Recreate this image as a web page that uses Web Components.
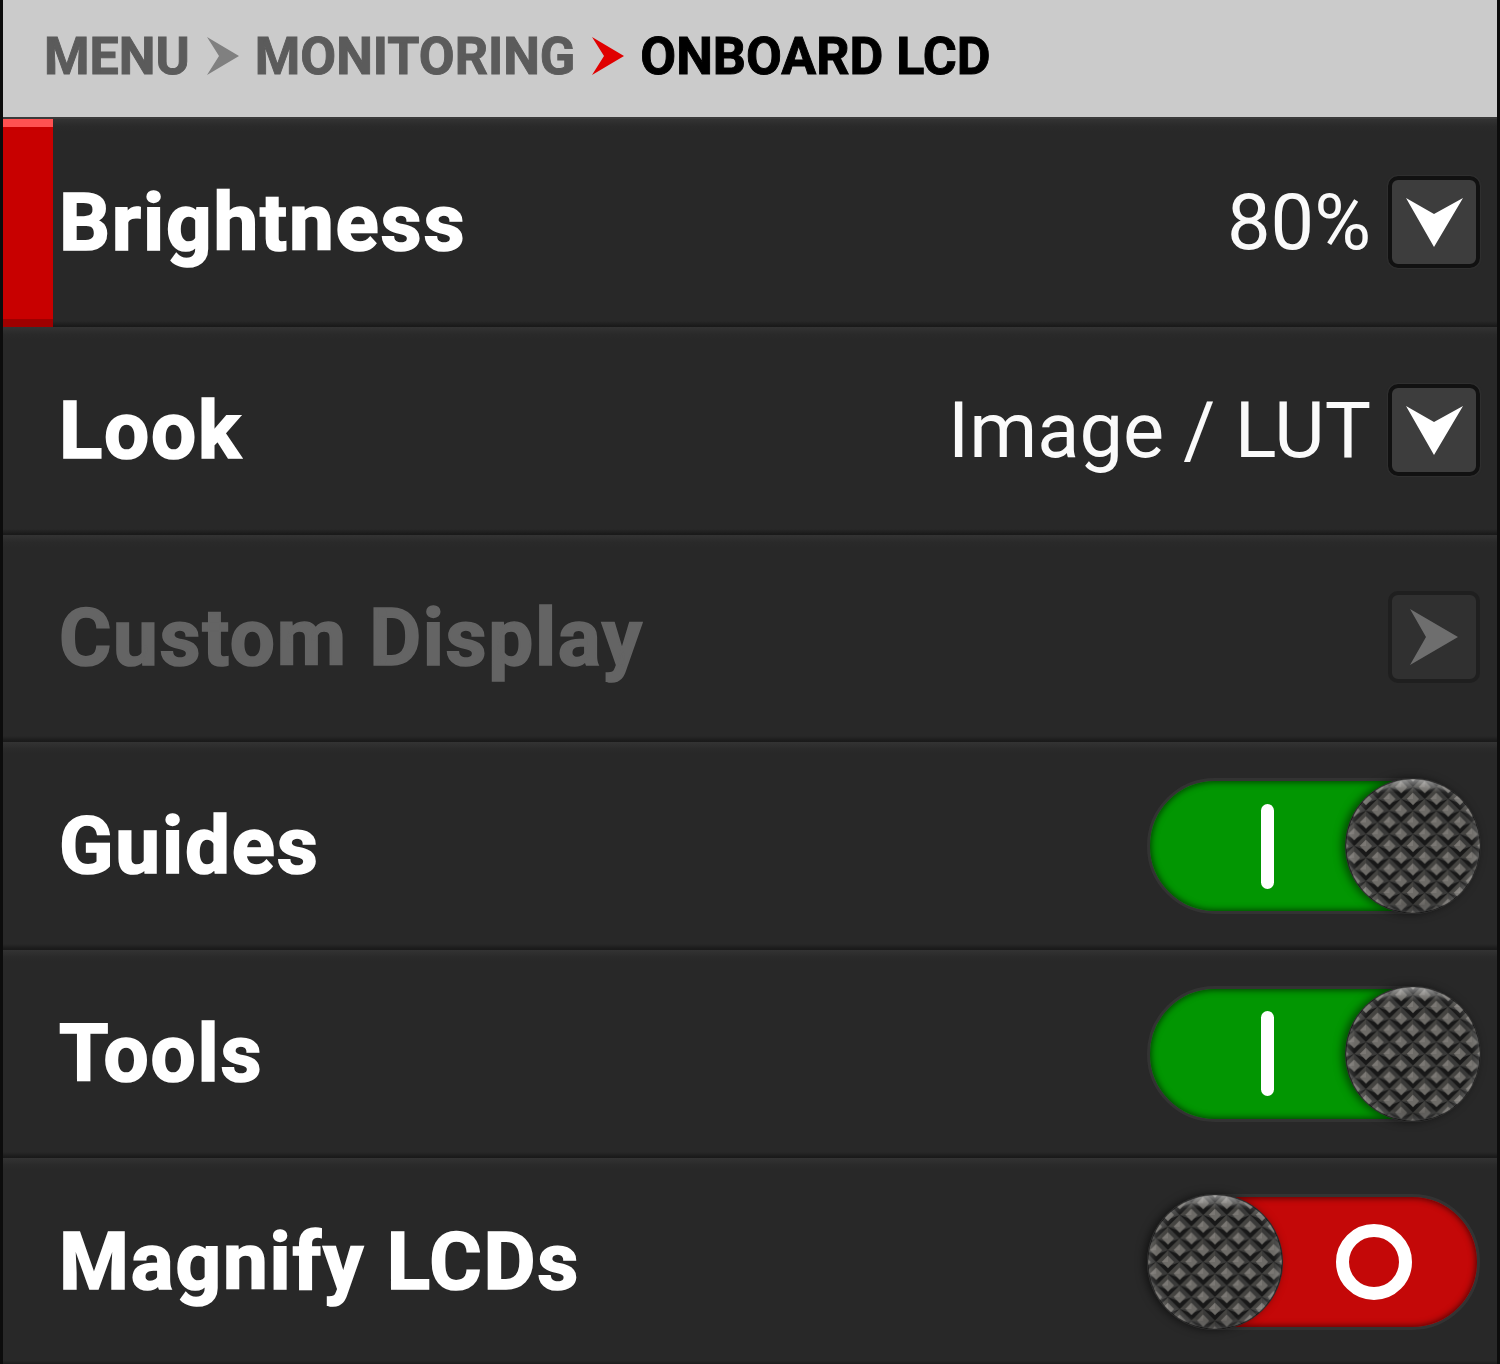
<!DOCTYPE html>
<html>
<head>
<meta charset="utf-8">
<title>Onboard LCD</title>
<style>
  html, body { margin: 0; padding: 0; background: #000; }
  body { font-family: Roboto, "Liberation Sans", sans-serif; width: 1500px; height: 1364px; overflow: hidden; }
</style>
</head>
<body>
<lcd-menu>
  <lcd-breadcrumb slot="header">
    <lcd-crumb>MENU</lcd-crumb>
    <lcd-crumb>MONITORING</lcd-crumb>
    <lcd-crumb current>ONBOARD LCD</lcd-crumb>
  </lcd-breadcrumb>
  <lcd-row selected>
    Brightness
    <lcd-value slot="control">80%</lcd-value>
    <lcd-button slot="control" direction="down"></lcd-button>
  </lcd-row>
  <lcd-row>
    Look
    <lcd-value slot="control">Image / LUT</lcd-value>
    <lcd-button slot="control" direction="down"></lcd-button>
  </lcd-row>
  <lcd-row disabled>
    Custom Display
    <lcd-button slot="control" direction="right" disabled></lcd-button>
  </lcd-row>
  <lcd-row>
    Guides
    <lcd-toggle slot="control" on></lcd-toggle>
  </lcd-row>
  <lcd-row>
    Tools
    <lcd-toggle slot="control" on></lcd-toggle>
  </lcd-row>
  <lcd-row>
    Magnify LCDs
    <lcd-toggle slot="control"></lcd-toggle>
  </lcd-row>
</lcd-menu>

<script>
class LcdMenu extends HTMLElement {
  constructor() {
    super();
    this.attachShadow({ mode: "open" });
    this.shadowRoot.innerHTML = `
      <style>
        :host {
          display: block;
          box-sizing: border-box;
          width: 1500px;
          height: 1364px;
          overflow: hidden;
          border-left: 3px solid #0c0c0c;
          border-right: 3px solid #0c0c0c;
          background: #282828;
        }
      </style>
      <slot name="header"></slot>
      <slot></slot>
    `;
  }
}

class LcdBreadcrumb extends HTMLElement {
  constructor() {
    super();
    this.attachShadow({ mode: "open" });
    this.shadowRoot.innerHTML = `
      <style>
        :host {
          display: flex;
          align-items: center;
          box-sizing: border-box;
          height: 119px;
          padding: 0 0 4px 41px;
          background: #cbcbcb;
          border-bottom: 2px solid #3a3a3a;
        }
      </style>
      <slot></slot>
    `;
  }
}

class LcdCrumb extends HTMLElement {
  constructor() {
    super();
    this.attachShadow({ mode: "open" });
    const current = this.hasAttribute("current");
    // last crumb has no chevron after it, the one before it is red
    const next = this.nextElementSibling;
    const nextIsCurrent = next && next.hasAttribute("current");
    this.shadowRoot.innerHTML = `
      <style>
        :host {
          display: inline-flex;
          align-items: center;
          font: 700 52px/1 Roboto, "Liberation Sans", sans-serif;
          color: ${current ? "#000" : "#5b5b5b"};
          -webkit-text-stroke: 0.9px currentColor;
          white-space: nowrap;
        }
        svg { display: block; margin: 0 16px 2px 16px; width: 33px; height: 40px; }
      </style>
      <slot></slot>
      ${current ? "" : `<svg viewBox="0 0 33 40"><polygon points="1,1 13,20 1,39 33,20" fill="${nextIsCurrent ? "#e00000" : "#808080"}"/></svg>`}
    `;
  }
}

class LcdRow extends HTMLElement {
  constructor() {
    super();
    this.attachShadow({ mode: "open" });
    this.shadowRoot.innerHTML = `
      <style>
        :host {
          display: grid;
          grid-template-columns: 50px 1fr auto;
          box-sizing: border-box;
          height: 207.75px;
          padding-right: 17px;
          background: linear-gradient(#333 0, #2a2a2a 7px, #282828 12px, #282828 calc(100% - 6px), #1a1a1a calc(100% - 1px));
          font: 700 80px/1 Roboto, "Liberation Sans", sans-serif;
          letter-spacing: 1.8px;
          -webkit-text-stroke: 1.7px currentColor;
          color: #fff;
        }
        :host([disabled]) { color: #646464; letter-spacing: 1.65px; }
        :host([selected]) .marker {
          background: linear-gradient(#ff5252 0 8px, #c80000 8px calc(100% - 8px), #9e0000 calc(100% - 8px));
        }
        .label { align-self: center; padding: 0 0 0 6px; white-space: nowrap; }
        .control { display: flex; align-items: center; gap: 17px; letter-spacing: 0; -webkit-text-stroke: 0; }
      </style>
      <div class="marker"></div>
      <div class="label"><slot></slot></div>
      <div class="control"><slot name="control"></slot></div>
    `;
  }
}

class LcdValue extends HTMLElement {
  constructor() {
    super();
    this.attachShadow({ mode: "open" });
    this.shadowRoot.innerHTML = `
      <style>
        :host {
          display: block;
          font: 400 77.6px/1 Roboto, "Liberation Sans", sans-serif;
          color: #fafafa;
          white-space: nowrap;
        }
      </style>
      <slot></slot>
    `;
  }
}

class LcdButton extends HTMLElement {
  constructor() {
    super();
    this.attachShadow({ mode: "open" });
    const points = this.getAttribute("direction") === "right"
      ? "22,18 38,46 22,74 70,46"
      : "18,22 46,38 75,22 46,71";
    this.shadowRoot.innerHTML = `
      <style>
        :host {
          display: block;
          box-sizing: border-box;
          width: 92px;
          height: 92px;
          margin-bottom: 2px;
          border: 4px solid #111;
          border-radius: 10px;
          background: #3d3d3d;
          box-shadow: 0 0 2px #444;
        }
        :host([disabled]) {
          border-color: #1f1f1f;
          background: #303030;
          box-shadow: none;
        }
        svg { display: block; margin: -4px; width: 92px; height: 92px; }
        polygon { fill: #fff; }
        :host([disabled]) polygon { fill: #6e6e6e; }
      </style>
      <svg viewBox="0 0 92 92"><polygon points="${points}"/></svg>
    `;
  }
}

class LcdKnob extends HTMLElement {
  constructor() {
    super();
    this.attachShadow({ mode: "open" });
    this.shadowRoot.innerHTML = `
      <style>
        :host { display: block; flex: none; width: 136px; height: 136px; border-radius: 50%; box-shadow: -3px 0 8px #0008; }
        svg { display: block; }
      </style>
      <svg viewBox="0 0 136 136" width="136" height="136">
        <defs>
          <g id="stud">
            <polygon points="0,-11.75 -11.75,0 0,11.75 11.75,0" fill="#3a3a39"/>
            <polygon points="-11.75,0 0,11.75 11.75,0 0,4.5" fill="#181818"/>
            <polygon points="0,-11.75 -11.75,0 -6,0 0,-6" fill="#454441"/>
            <polygon points="0,-6 -6,0 0,6 6,0" fill="#6d6b67"/>
            <polygon points="0,-6 -6,0 0,0" fill="#7b7874"/>
          </g>
          <pattern id="knurl" width="23.5" height="23.5" patternUnits="userSpaceOnUse" patternTransform="translate(68 68)">
            <use href="#stud" x="0" y="0"/>
            <use href="#stud" x="23.5" y="0"/>
            <use href="#stud" x="0" y="23.5"/>
            <use href="#stud" x="23.5" y="23.5"/>
            <use href="#stud" x="11.75" y="11.75"/>
          </pattern>
          <radialGradient id="rim" cx="50%" cy="50%" r="50%">
            <stop offset="88%" stop-color="#fff" stop-opacity="0"/>
            <stop offset="98%" stop-color="#fff" stop-opacity=".12"/>
            <stop offset="100%" stop-color="#000" stop-opacity=".4"/>
          </radialGradient>
          <linearGradient id="sheen" x1="0" y1="0" x2="0" y2="1">
            <stop offset="0" stop-color="#fff" stop-opacity=".4"/>
            <stop offset=".1" stop-color="#fff" stop-opacity="0"/>
            <stop offset=".88" stop-color="#000" stop-opacity="0"/>
            <stop offset="1" stop-color="#000" stop-opacity=".3"/>
          </linearGradient>
        </defs>
        <circle cx="68" cy="68" r="68" fill="#2a2a2a"/>
        <circle cx="68" cy="68" r="67" fill="url(#knurl)"/>
        <circle cx="68" cy="68" r="67" fill="url(#sheen)"/>
        <circle cx="68" cy="68" r="67" fill="url(#rim)"/>
      </svg>
    `;
  }
}

class LcdToggle extends HTMLElement {
  constructor() {
    super();
    this.attachShadow({ mode: "open" });
    const on = this.hasAttribute("on");
    this.shadowRoot.innerHTML = `
      <style>
        :host {
          display: flex;
          align-items: center;
          box-sizing: border-box;
          width: 333px;
          height: 136px;
          border-radius: 68px;
          border: 3px solid #333;
          background: #c40808;
          box-shadow: inset 0 0 6px 1px #0009;
        }
        :host([on]) { background: #029602; }
        lcd-knob { margin: -3px -4px -3px -3px; }
        .bar { margin-left: 111px; margin-right: auto; width: 13px; height: 85px; border-radius: 7px; background: #fff; }
        .ring { box-sizing: border-box; margin-left: 57px; width: 76px; height: 76px; border-radius: 50%; border: 13px solid #fff; }
      </style>
      ${on ? `<div class="bar"></div><lcd-knob></lcd-knob>` : `<lcd-knob></lcd-knob><div class="ring"></div>`}
    `;
  }
}

customElements.define("lcd-menu", LcdMenu);
customElements.define("lcd-breadcrumb", LcdBreadcrumb);
customElements.define("lcd-row", LcdRow);
customElements.define("lcd-value", LcdValue);
customElements.define("lcd-button", LcdButton);
customElements.define("lcd-knob", LcdKnob);
customElements.define("lcd-toggle", LcdToggle);
customElements.define("lcd-crumb", LcdCrumb);
</script>
</body>
</html>
